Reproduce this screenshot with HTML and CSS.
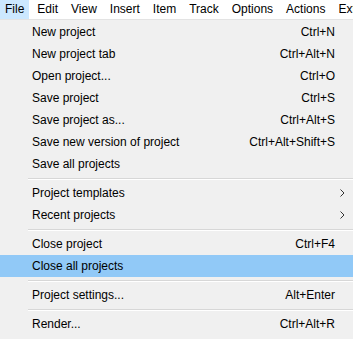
FILE: index.html
```html
<!DOCTYPE html>
<html lang="en">
<head>
  <meta charset="UTF-8" />
  <meta name="viewport" content="width=device-width, initial-scale=1.0" />
  <title>File menu</title>
  <link rel="stylesheet" href="styles.css">
</head>
<body>
  <div class="menubar">
    <span class="menubar-item active">File</span>
    <span class="menubar-item">Edit</span>
    <span class="menubar-item">View</span>
    <span class="menubar-item">Insert</span>
    <span class="menubar-item">Item</span>
    <span class="menubar-item">Track</span>
    <span class="menubar-item">Options</span>
    <span class="menubar-item">Actions</span>
    <span class="menubar-item">Extensions</span>
  </div>

  <div class="menu">
    <div class="row"><span class="label">New project</span><span class="key">Ctrl+N</span><span class="sub"></span></div>
    <div class="row"><span class="label">New project tab</span><span class="key">Ctrl+Alt+N</span><span class="sub"></span></div>
    <div class="row"><span class="label">Open project...</span><span class="key">Ctrl+O</span><span class="sub"></span></div>
    <div class="row"><span class="label">Save project</span><span class="key">Ctrl+S</span><span class="sub"></span></div>
    <div class="row"><span class="label">Save project as...</span><span class="key">Ctrl+Alt+S</span><span class="sub"></span></div>
    <div class="row"><span class="label">Save new version of project</span><span class="key">Ctrl+Alt+Shift+S</span><span class="sub"></span></div>
    <div class="row"><span class="label">Save all projects</span><span class="key"></span><span class="sub"></span></div>
    <div class="sep"></div>
    <div class="row"><span class="label">Project templates</span><span class="key"></span>
      <span class="sub"><svg width="5" height="8" viewBox="0 0 5 8"><path d="M0.5 0.5 L4 4 L0.5 7.5" fill="none" stroke="#333" stroke-width="1"/></svg></span></div>
    <div class="row"><span class="label">Recent projects</span><span class="key"></span>
      <span class="sub"><svg width="5" height="8" viewBox="0 0 5 8"><path d="M0.5 0.5 L4 4 L0.5 7.5" fill="none" stroke="#333" stroke-width="1"/></svg></span></div>
    <div class="sep"></div>
    <div class="row"><span class="label">Close project</span><span class="key">Ctrl+F4</span><span class="sub"></span></div>
    <div class="row hover"><span class="label">Close all projects</span><span class="key"></span><span class="sub"></span></div>
    <div class="sep"></div>
    <div class="row"><span class="label">Project settings...</span><span class="key">Alt+Enter</span><span class="sub"></span></div>
    <div class="sep"></div>
    <div class="row"><span class="label">Render...</span><span class="key">Ctrl+Alt+R</span><span class="sub"></span></div>
  </div>
</body>
</html>
```

FILE: styles.css
```css
body {
  margin: 0;
  font-family: "Liberation Sans", Arial, sans-serif;
  font-size: 12px;
  color: #000;
  background-color: #f0f0f0;
  overflow: hidden;
}
.menubar {
  display: flex;
  gap: 3px;
  height: 19px;
  background-color: #fff;
  white-space: nowrap;
}
.menubar-item {
  padding: 0 5px;
  line-height: 19px;
}
.menubar-item.active {
  background-color: #cce8ff;
}
.menu {
  border-top: 1px solid #e3e3e3;
  padding-top: 1px;
  background-color: #f0f0f0;
}
.row {
  display: flex;
  align-items: center;
  height: 22px;
  padding-left: 32px;
  white-space: nowrap;
}
.row.hover {
  background-color: #91c9f7;
}
.label {
  flex: 1;
}
.sub {
  width: 18px;
  display: flex;
  align-items: center;
  padding-left: 5px;
  box-sizing: border-box;
}
.sep {
  height: 7px;
  margin-left: 28px;
  display: flex;
  flex-direction: column;
  justify-content: center;
}
.sep:before {
  content: "";
  height: 1px;
  background-color: #d7d7d7;
  border-bottom: 1px solid #fff;
}
```
